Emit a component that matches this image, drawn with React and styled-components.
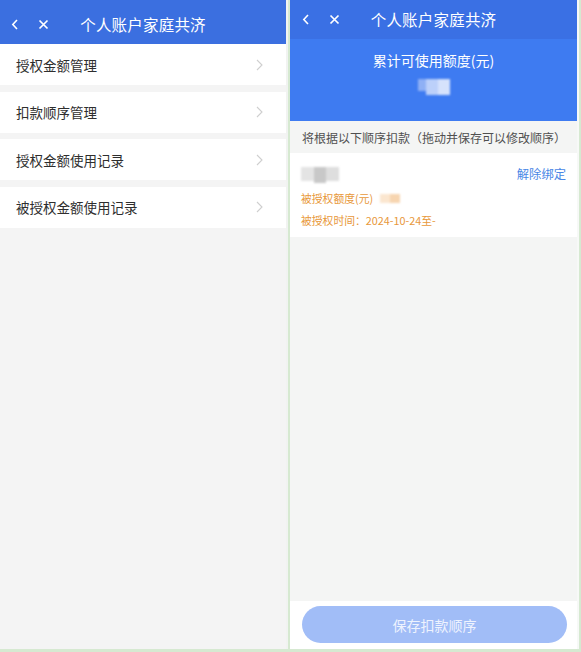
import React from "react";
import styled, { createGlobalStyle } from "styled-components";

const Global = createGlobalStyle`
  html, body { margin: 0; padding: 0; }
  body {
    width: 581px; height: 652px; overflow: hidden;
    font-family: "Noto Sans CJK SC", "Noto Sans", sans-serif;
    background: #d6e9d1;
  }
`;

const Frame = styled.div`
  display: flex;
  gap: 2px;
  width: 581px;
  height: 649px;
  background: #d6e9d1;
`;

const Panel = styled.div`
  display: flex;
  flex-direction: column;
  width: ${(p) => p.$w}px;
  height: 649px;
  background: ${(p) => p.$bg};
  border-right: 2px solid ${(p) => p.$edge};
  overflow: hidden;
`;

const Header = styled.div`
  position: relative;
  display: flex;
  align-items: center;
  justify-content: center;
  height: ${(p) => p.$h}px;
  padding-top: ${(p) => p.$pt || 0}px;
  box-sizing: border-box;
  flex-shrink: 0;
  background: ${(p) => p.$bg};
  color: #fff;
  font-size: 15.5px;
`;

const NavIcons = styled.div`
  position: absolute;
  left: ${(p) => p.$left}px;
  top: ${(p) => p.$pt || 0}px;
  bottom: 0;
  display: flex;
  align-items: center;
  gap: 19px;
`;

const Title = styled.div`
  letter-spacing: 0.2px;
  transform: translateY(${(p) => p.$dy || 0}px);
`;

const Menu = styled.div`
  display: flex;
  flex-direction: column;
  gap: 6.67px;
`;

const Row = styled.div`
  display: flex;
  align-items: center;
  justify-content: space-between;
  height: 41px;
  padding: 0 23px 0 16px;
  background: #fff;
  color: #2e2e2e;
  font-size: 13.5px;
`;

const Hero = styled.div`
  display: flex;
  flex-direction: column;
  align-items: center;
  height: 82px;
  flex-shrink: 0;
  background: #3e7bf1;
  color: #fff;
  font-size: 14px;
  padding-top: 11px;
  box-sizing: border-box;
`;

const Blur = styled.div`
  display: flex;
  filter: blur(1.2px);
  margin: ${(p) => p.$m || 0};
`;

const Chunk = styled.div`
  width: ${(p) => p.$w}px;
  height: ${(p) => p.$h}px;
  background: ${(p) => p.$c};
`;

const Notice = styled.div`
  height: 32px;
  display: flex;
  align-items: center;
  padding-left: 12px;
  flex-shrink: 0;
  color: #505050;
  font-size: 12px;
  white-space: nowrap;
  background: #f4f5f4;
`;

const Card = styled.div`
  position: relative;
  display: flex;
  flex-direction: column;
  height: 84px;
  padding: 13px 12px 0 11px;
  box-sizing: border-box;
  background: #fff;
  flex-shrink: 0;
`;

const Unbind = styled.div`
  position: absolute;
  right: 11px;
  top: 12px;
  color: #4a87e6;
  font-size: 12.3px;
`;

const Info = styled.div`
  display: flex;
  align-items: center;
  gap: 7px;
  color: #e8983a;
  font-size: 10.8px;
  height: 22px;
`;

const Fill = styled.div`
  flex: 1;
  background: #f4f5f4;
`;

const Footer = styled.div`
  height: 48px;
  flex-shrink: 0;
  background: #fff;
  display: flex;
  align-items: flex-start;
  padding: 5px 10px 0 12px;
  box-sizing: border-box;
`;

const SaveBtn = styled.div`
  flex: 1;
  height: 37px;
  border-radius: 19px;
  background: #a1bdf7;
  color: #eef3fe;
  font-size: 14px;
  display: flex;
  align-items: center;
  justify-content: center;
`;

const Back = () => (
  <svg width="8" height="11" viewBox="0 0 8 11">
    <polyline points="6,1 1.8,5.5 6,10" fill="none" stroke="#fff" strokeWidth="1.6" />
  </svg>
);
const Close = () => (
  <svg width="11" height="11" viewBox="0 0 11 11">
    <path d="M1.5 1.5 L9.5 9.5 M9.5 1.5 L1.5 9.5" stroke="#fff" strokeWidth="1.7" />
  </svg>
);
const Chevron = () => (
  <svg width="7" height="12" viewBox="0 0 7 12">
    <polyline points="1,1 6,6 1,11" fill="none" stroke="#cfcfcf" strokeWidth="1.1" />
  </svg>
);

const items = ["授权金额管理", "扣款顺序管理", "授权金额使用记录", "被授权金额使用记录"];

export default function App() {
  return (
    <>
      <Global />
      <Frame>
        <Panel $w={286} $bg="#f4f4f4" $edge="#f1f3f1">
          <Header $h={44} $pt={4} $bg="#3b6fe0">
            <NavIcons $left={11} $pt={4}>
              <Back />
              <Close />
            </NavIcons>
            <Title>个人账户家庭共济</Title>
          </Header>
          <Menu>
            {items.map((t) => (
              <Row key={t}>
                <span>{t}</span>
                <Chevron />
              </Row>
            ))}
          </Menu>
        </Panel>
        <Panel $w={287} $bg="#f4f5f4" $edge="#f7f9f7">
          <Header $h={39} $bg="#3a70e4">
            <NavIcons $left={12}>
              <Back />
              <Close />
            </NavIcons>
            <Title $dy={-1}>个人账户家庭共济</Title>
          </Header>
          <Hero>
            <div>累计可使用额度(元)</div>
            <Blur $m="9px 0 0 0">
              <Chunk $w={8} $h={12} $c="#8fb0f5" />
              <Chunk $w={12} $h={16} $c="#bcd0fa" />
              <Chunk $w={12} $h={16} $c="#d6e2fc" />
            </Blur>
          </Hero>
          <Notice>将根据以下顺序扣款（拖动并保存可以修改顺序）</Notice>
          <Card>
            <Blur $m="1px 0 0 0">
              <Chunk $w={13} $h={14} $c="#e4e4e4" />
              <Chunk $w={12} $h={16} $c="#c8c8c8" />
              <Chunk $w={13} $h={14} $c="#dedede" />
            </Blur>
            <Unbind>解除绑定</Unbind>
            <Info style={{ marginTop: 4 }}>
              <span>被授权额度(元)</span>
              <Blur>
                <Chunk $w={10} $h={9} $c="#fbe6cf" />
                <Chunk $w={10} $h={9} $c="#f7d5b0" />
              </Blur>
            </Info>
            <Info>
              <span>被授权时间：2024-10-24至-</span>
            </Info>
          </Card>
          <Fill />
          <Footer>
            <SaveBtn>保存扣款顺序</SaveBtn>
          </Footer>
        </Panel>
      </Frame>
    </>
  );
}
